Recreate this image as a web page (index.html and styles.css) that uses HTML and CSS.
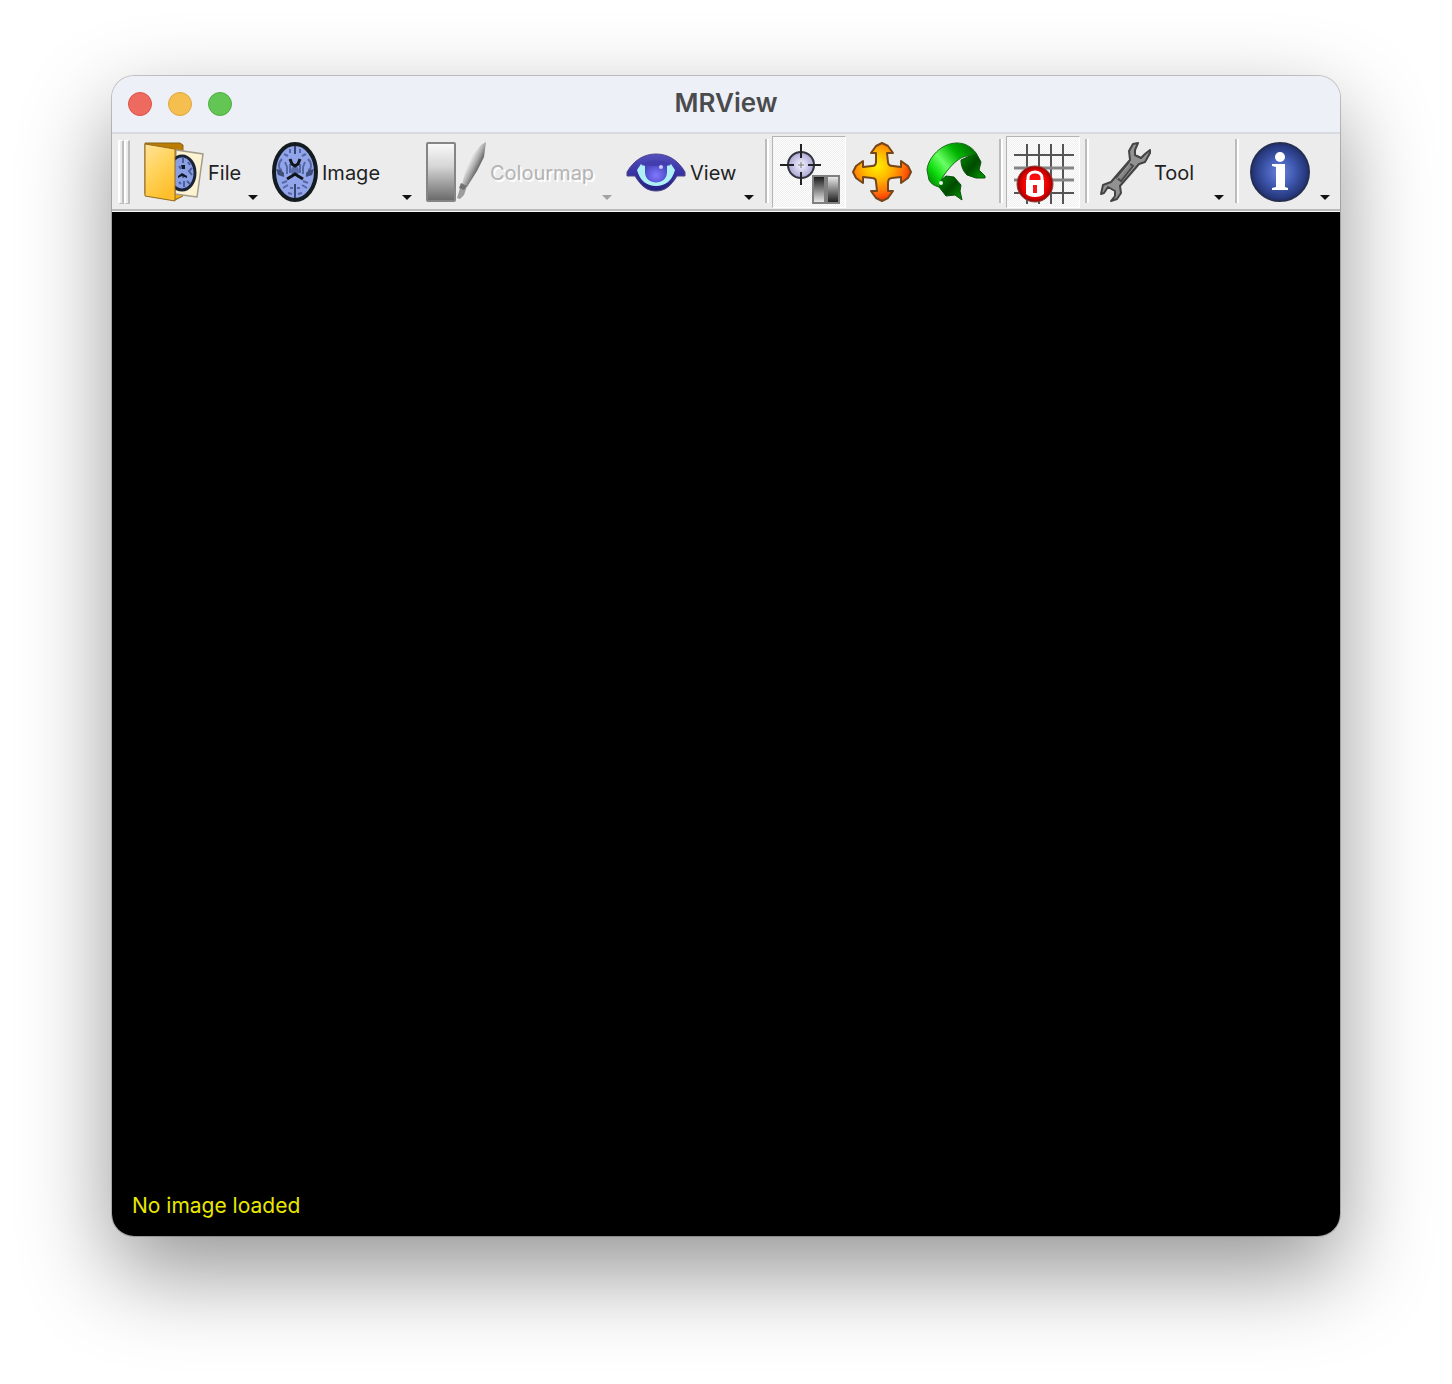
FILE: index.html
```html
<!DOCTYPE html>
<html lang="en">
<head>
<meta charset="utf-8">
<title>MRView</title>
<link rel="stylesheet" href="styles.css">
</head>
<body>
<main class="window">
  <header class="titlebar">
    <div class="lights">
      <button class="light light-close" aria-label="Close"></button>
      <button class="light light-min" aria-label="Minimise"></button>
      <button class="light light-zoom" aria-label="Zoom"></button>
    </div>
    <h1 class="title">MRView</h1>
  </header>
  <div class="toolbar" role="toolbar" aria-label="Main toolbar">
    <div class="handle"><span class="grip"></span><span class="grip"></span></div>
    <button class="menu menu-file">
      <svg class="icon" viewBox="0 0 60 60" aria-hidden="true">
        <defs>
          <linearGradient id="folder" x1="0" y1="0" x2=".5" y2="1"><stop offset="0" stop-color="#ffe39a"/><stop offset=".5" stop-color="#ffd35c"/><stop offset="1" stop-color="#ffbf2c"/></linearGradient>
        </defs>
        <path d="M1 1H36L39 3V54L31 58L1 52Z" fill="#b97c00" stroke="#8a641c"/>
        <path d="M31 52L38 51V54L31 57Z" fill="#f0ae18"/>
        <path d="M32 8L59 12L53 55L31 52Z" fill="#fdf3d3" stroke="#a39c8c" stroke-width="1.500"/>
        <ellipse cx="38" cy="31" rx="13" ry="17" fill="#8a9fe4" stroke="#1b2436" stroke-width="3"/>
        <path d="M39 15V21M44 20L46 23M39 33V36M40 39V45M48 26L45 29L48 33M35 40L37 42M43 39L46 42M35 24L37 27" fill="none" stroke="#4d5f9c" stroke-width="2"/>
        <path d="M37 23H41V27H38ZM34 34L38 31L43 34V36L38 34L34 36Z" fill="#10182a"/>
        <path d="M1 2L31 7V59L1 54Z" fill="url(#folder)" stroke="#94691c"/>
      </svg>
      <span class="label">File</span><span class="arrow"></span>
    </button>
    <button class="menu menu-image">
      <svg class="icon icon-brain" viewBox="0 0 46 60" aria-hidden="true">
        <ellipse cx="23" cy="30" rx="21" ry="28" fill="#93a5ea" stroke="#141c22" stroke-width="4"/>
        <g fill="none" stroke="#5668a6" stroke-width="2">
          <path d="M18 7V11M28 7V11M12 12L16 14M34 12L30 14M18 46H21M25 46H28M16 51L20 52M30 51L26 52M11 46L16 43M35 46L30 43M10 41L15 39M36 41L31 39"/>
          <path d="M10 17C5 22 7 28 10 28M36 17C41 22 39 28 36 28M13 20L15 25V32M33 20L31 25V32M18 22V31M28 22V31"/>
        </g>
        <path d="M23 4V12M23 42V56" stroke="#35466f" stroke-width="2"/>
        <path d="M4 27L9 28L12 31V35L6 33ZM42 27L37 28L34 31V35L40 33Z" fill="#3f4f79"/>
        <ellipse cx="23" cy="29" rx="4" ry="5" fill="#5d6fae"/>
        <path d="M18 17L20 22L23 24L26 22L28 17M15 37L20 34L23 32L26 34L31 37" fill="none" stroke="#10151c" stroke-width="3"/>
      </svg>
      <span class="label">Image</span><span class="arrow"></span>
    </button>
    <button class="menu menu-colourmap" disabled>
      <svg class="icon" viewBox="0 0 60 60" aria-hidden="true">
        <defs>
          <linearGradient id="ramp" x1="0" y1="0" x2="0" y2="1"><stop offset="0" stop-color="#fafafa"/><stop offset=".4" stop-color="#d6d6d6"/><stop offset="1" stop-color="#686868"/></linearGradient>
          <linearGradient id="brush" gradientUnits="userSpaceOnUse" x1="41" y1="20" x2="55" y2="27"><stop offset=".2" stop-color="#ddd"/><stop offset=".5" stop-color="#aaa"/><stop offset=".85" stop-color="#606060"/></linearGradient>
        </defs>
        <rect x="1" y="1" width="28" height="58" rx="1" fill="url(#ramp)" stroke="#858585" stroke-width="2"/>
        <path d="M60 0L55 3L47 13L39 31L36 42L41 45L51 29L58 15Z" fill="url(#brush)"/>
        <path d="M35 43L41 44L38 53L34 57L31 56Z" fill="#9c9c9c"/>
        <path d="M35 41L41 44L38 48L33 46Z" fill="#727272"/>
      </svg>
      <span class="label">Colourmap</span><span class="arrow"></span>
    </button>
    <button class="menu menu-view">
      <svg class="icon" viewBox="0 0 60 60" aria-hidden="true">
        <defs>
          <linearGradient id="lid" x1="0" y1="0" x2="0" y2="1"><stop offset="0" stop-color="#5550bd"/><stop offset=".5" stop-color="#3933a4"/><stop offset="1" stop-color="#25207e"/></linearGradient>
          <radialGradient id="iris" cx=".5" cy=".65" r=".6"><stop offset="0" stop-color="#8078ff"/><stop offset="1" stop-color="#4845be"/></radialGradient>
        </defs>
        <path d="M1 30C8 18 18 12 30 12C42 12 52 18 59 30V34H51C45 44 39 49 30 49C21 49 15 44 9 34H1Z" fill="url(#lid)" stroke="#4c498c"/>
        <path d="M11 28L15 22H45L49 28C46 39 39 44 30 44C21 44 14 39 11 28Z" fill="#adf0f6"/>
        <path d="M19 20H41V30C41 44 19 44 19 30Z" fill="url(#iris)"/>
        <path d="M15 23C20 17 40 17 45 23L40 24H20Z" fill="#433db0"/>
        <circle cx="35" cy="25" r="2" fill="#c9c8ff"/>
      </svg>
      <span class="label">View</span><span class="arrow"></span>
    </button>
    <span class="separator"></span>
    <button class="tool checked" aria-label="Select" aria-pressed="true">
      <svg class="icon" viewBox="0 0 60 60" aria-hidden="true">
        <defs>
          <radialGradient id="target"><stop offset="0" stop-color="#f6f4ff"/><stop offset="1" stop-color="#aaa5d4"/></radialGradient>
          <linearGradient id="dark" x1="0" y1="0" x2="0" y2="1"><stop offset="0" stop-color="#151515"/><stop offset="1" stop-color="#eee"/></linearGradient>
          <linearGradient id="light" x1="0" y1="0" x2="0" y2="1"><stop offset="0" stop-color="#f0f0f0"/><stop offset="1" stop-color="#181818"/></linearGradient>
        </defs>
        <circle cx="21" cy="23" r="13" fill="url(#target)" stroke="#33323d" stroke-width="2"/>
        <path d="M21 2V16M21 30V43M0 23H14M28 23H41" stroke="#222226" stroke-width="2"/>
        <path d="M18 23H24M21 20V26" stroke="#777"/>
        <rect x="33" y="34" width="12" height="27" fill="url(#dark)" stroke="#808080" stroke-width="2"/>
        <rect x="47" y="34" width="12" height="27" fill="url(#light)" stroke="#808080" stroke-width="2"/>
      </svg>
    </button>
    <button class="tool" aria-label="Pan">
      <svg class="icon" viewBox="0 0 60 60" aria-hidden="true">
        <defs><radialGradient id="fire" gradientUnits="userSpaceOnUse" cx="25" cy="24" r="34"><stop offset="0" stop-color="#fff000"/><stop offset=".4" stop-color="#ffb800"/><stop offset=".8" stop-color="#ff6b08"/><stop offset="1" stop-color="#ff3900"/></radialGradient></defs>
        <path d="M30 1L36 4L41 11H35L36 20C36 23 38 24 41 24L49 25V19L56 24L59 30L56 36L49 41V35L40 36C37 36 36 38 36 41V49H41L36 56L30 59L24 56L19 49H25L24 40C24 37 23 36 20 36L11 35V41L4 36L1 30L4 24L11 19V25L20 24C23 24 24 23 24 20V11H19L24 4Z" fill="url(#fire)" stroke="#75461c" stroke-width="2" stroke-linejoin="round"/>
      </svg>
    </button>
    <button class="tool" aria-label="Rotate">
      <svg class="icon" viewBox="0 0 60 60" aria-hidden="true">
        <defs>
          <linearGradient id="ribbon" gradientUnits="userSpaceOnUse" x1="4" y1="42" x2="48" y2="6"><stop offset="0" stop-color="#008a00"/><stop offset=".2" stop-color="#0edc0e"/><stop offset=".42" stop-color="#69ff62"/><stop offset=".7" stop-color="#00b600"/><stop offset="1" stop-color="#006b00"/></linearGradient>
          <linearGradient id="fold" x1="0" y1="0" x2="1" y2="1"><stop offset="0" stop-color="#008a00"/><stop offset=".5" stop-color="#004a00"/><stop offset="1" stop-color="#009c00"/></linearGradient>
        </defs>
        <path d="M35 18L50 11L55 20L53 28L59 34V36H50L41 33C37 29 35 24 35 18Z" fill="url(#fold)" stroke="#07500b"/>
        <path d="M15 38L20 34L28 35L35 43L34 49L36 58L29 53L20 54L13 45Z" fill="url(#fold)" stroke="#07500b"/>
        <path d="M1 28C2 16 15 1 31 1C38 1 45 4 50 11L43 14C35 13 23 24 15 38L13 45C9 44 5 42 3 38Z" fill="url(#ribbon)" stroke="#176c18"/>
        <circle cx="15" cy="41" r="2" fill="#e5f2e5"/>
      </svg>
    </button>
    <span class="separator"></span>
    <button class="tool checked" aria-label="Snap to image" aria-pressed="true">
      <svg class="icon" viewBox="0 0 60 60" aria-hidden="true">
        <defs><radialGradient id="red"><stop offset=".4" stop-color="#ff1010"/><stop offset=".75" stop-color="#e00000"/><stop offset="1" stop-color="#980000"/></radialGradient></defs>
        <path d="M13 2V62M25 2V62M37 2V62M49 2V62M0 13H60M0 51H60" stroke="#555" stroke-width="2"/>
        <path d="M0 26H60M0 38H60" stroke="#858585" stroke-width="3"/>
        <circle cx="21" cy="42" r="18" fill="url(#red)" stroke="#8f4444"/>
        <path d="M14 38V36C14 28 28 28 28 36V38" fill="none" stroke="#fff" stroke-width="3"/>
        <path d="M12 38H30V52Q27 55 21 55Q15 55 12 52Z" fill="#fff"/>
        <path d="M19 43H23V51H19Z" fill="#f01818"/>
      </svg>
    </button>
    <span class="separator"></span>
    <button class="menu menu-tool">
      <svg class="icon icon-wrench" viewBox="0 0 50 60" aria-hidden="true">
        <path d="M38 1L33 2L29 9L30 18L11 40L3 43L1 52L4 51L8 45L15 49V54L11 59L17 57L21 51L20 44L39 22L45 20L50 11V8L45 12L41 16L35 13V8Z" fill="#929292" stroke="#444" stroke-width="2" stroke-linejoin="round"/>
        <path d="M29 21L33 24L21 39L17 36Z" fill="#858585" stroke="#4b4b4b" stroke-width="2"/>
        <path d="M31 20L17 37" stroke="#aaa"/>
      </svg>
      <span class="label">Tool</span><span class="arrow"></span>
    </button>
    <span class="separator"></span>
    <button class="menu menu-info" aria-label="Help">
      <svg class="icon" viewBox="0 0 60 60" aria-hidden="true">
        <defs><radialGradient id="blue"><stop offset="0" stop-color="#6d83dc"/><stop offset=".5" stop-color="#415ab2"/><stop offset="1" stop-color="#203070"/></radialGradient></defs>
        <circle cx="30" cy="30" r="29" fill="url(#blue)" stroke="#242f52" stroke-width="2"/>
        <circle cx="30" cy="15" r="5" fill="#fff"/>
        <path d="M22 22H35V45L38 46V48H22V46L26 45V25L22 24Z" fill="#fff"/>
      </svg>
      <span class="arrow"></span>
    </button>
  </div>
  <section class="viewport" aria-label="Image view"><p class="status">No image loaded</p></section>
</main>
</body>
</html>
```
FILE: styles.css
```css
* { box-sizing: border-box; }
body {
  margin: 0;
  min-height: 100vh;
  padding: 76px 112px 148px;
  display: flex;
  background: #fff;
  font-family: Inter, "Liberation Sans", sans-serif;
}
button { margin: 0; padding: 0; border: 0; background: none; font: inherit; color: inherit; }
.window {
  flex: 1;
  min-width: 0;
  display: flex;
  flex-direction: column;
  overflow: hidden;
  border-radius: 22px;
  background: #ececec;
  box-shadow: 0 0 0 1px rgba(0, 0, 0, .2), 0 36px 90px rgba(0, 0, 0, .42);
}
.titlebar {
  height: 58px;
  padding: 0 16px;
  display: grid;
  grid-template-columns: 1fr auto 1fr;
  align-items: center;
  background: #edf0f7;
  border-bottom: 2px solid #d7dbdf;
}
.lights { display: flex; gap: 16px; }
.light { width: 24px; height: 24px; border-radius: 50%; border: 1px solid; }
.light-close { background: #ee6a5f; border-color: #dc5148; }
.light-min { background: #f5bf4f; border-color: #dda63c; }
.light-zoom { background: #62c554; border-color: #50ae43; }
.title { margin: 0; padding-bottom: 2px; font-size: 26px; line-height: 32px; font-weight: 600; color: #4a4b4d; }
.toolbar {
  height: 78px;
  padding: 2px 4px 0 6px;
  display: flex;
  align-items: flex-start;
  background: #ececec;
  border-bottom: 1px solid #f8f8f8;
  box-shadow: inset 0 -2px #b9b9b9;
}
.handle { width: 18px; padding-top: 4px; display: flex; }
.grip {
  width: 6px;
  height: 64px;
  border: solid #fff;
  border-width: 1px 0 0 2px;
  border-right: 2px solid #bcbcbc;
  border-bottom: 1px solid #bcbcbc;
}
.menu, .tool { height: 72px; display: flex; align-items: center; flex: none; }
.menu { padding: 0 6px 0 8px; gap: 4px; font-size: 20px; line-height: 24px; color: #222; }
.label { padding-top: 2px; }
.menu:disabled { color: #b4b4b4; text-shadow: 2px 2px #fff; }
.menu-file { width: 128px; }
.menu-image { width: 154px; }
.menu-colourmap { width: 200px; }
.menu-view { width: 142px; }
.menu-tool { width: 138px; }
.menu-info { width: 94px; }
.icon { width: 60px; height: 60px; flex: none; overflow: visible; }
.icon-brain { width: 46px; }
.icon-wrench { width: 50px; }
.arrow {
  width: 10px;
  height: 5px;
  margin: 0 0 8px auto;
  align-self: flex-end;
  background: #111;
  clip-path: polygon(0 0, 100% 0, 50% 100%);
}
.menu:disabled .arrow { background: #a2a2a2; }
.tool { width: 74px; padding-left: 6px; }
.checked {
  border: 1px solid #fff;
  border-top-color: #b4b4b4;
  border-left-color: #b4b4b4;
  background: repeating-conic-gradient(#eee 0 25%, #fff 0 50%) 0 0 / 2px 2px;
}
.checked { padding-left: 7px; }
.separator {
  width: 4px;
  height: 64px;
  margin: 3px 3px 0 5px;
  border-left: 2px solid #bcbcbc;
  border-right: 2px solid #fff;
}
.viewport {
  flex: 1;
  padding: 18px 20px;
  display: flex;
  align-items: flex-end;
  background: #000;
}
.status { margin: 0; font-size: 21px; line-height: 24px; color: #e8e800; }
```
